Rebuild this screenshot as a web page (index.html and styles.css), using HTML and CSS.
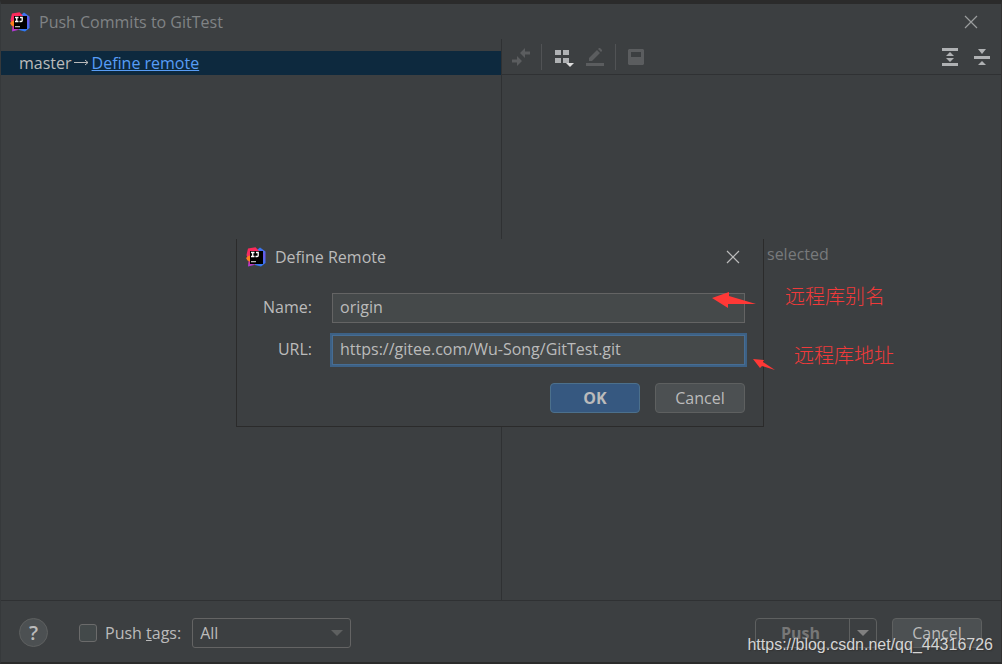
FILE: index.html
```html
<!DOCTYPE html>
<html lang="en">
<head>
<meta charset="utf-8">
<title>Push Commits to GitTest</title>
<link rel="stylesheet" href="styles.css">
</head>
<body>
<svg class="defs" aria-hidden="true">
  <defs>
    <linearGradient id="pink" x1="0" y1="0" x2="0" y2="1"><stop offset="0" stop-color="#fe2857"/><stop offset="0.6" stop-color="#f0326e"/><stop offset="1" stop-color="#a83ae0"/></linearGradient>
    <linearGradient id="blue" x1="0" y1="0" x2="0" y2="1"><stop offset="0" stop-color="#2f7df0"/><stop offset="0.4" stop-color="#6b57e8"/><stop offset="1" stop-color="#2a7bf4"/></linearGradient>
    <symbol id="logo" viewBox="0 0 20 20">
      <path fill="url(#blue)" d="M11 3 14 0.500 19.500 4.500V16L15 19.500 9 18Z"/>
      <path fill="url(#pink)" d="M2 1.500 9.500 0.300 13 4 6 12 6 17 10 17.500 2 19.500 2.500 14 0.500 8Z"/>
      <path fill="#fc801d" d="M0 11 3 8.500 5 9V15L1.500 13.500Z"/>
      <path fill="#000" d="M4 4H17V17H4Z"/>
      <path fill="none" stroke="#fff" stroke-width="1.300" d="M5 5.500H8.500M6.750 5.500V9.500M5 9.500H8.500M10 5.500H12.200V8.500Q12.200 9.500 11.200 9.500H9.500"/>
      <path fill="#b5b5b5" d="M5 14H10V15.300H5Z"/>
    </symbol>
  </defs>
</svg>
<div class="window">
  <header class="titlebar">
    <svg class="logo"><use href="#logo"/></svg>
    <h1 class="title">Push Commits to GitTest</h1>
    <button class="close" aria-label="Close"><svg width="14" height="14" viewBox="0 0 14 14"><path d="M1 1 13 13M13 1 1 13"/></svg></button>
  </header>
  <main class="panes">
    <section class="tree">
      <div class="branch"><span>master</span><svg width="17" height="10" viewBox="0 0 17 10"><path d="M1 4.500H15M12 2 15 4.500 12 7"/></svg><a href="#remote">Define remote</a></div>
    </section>
    <section class="details">
      <div class="toolbar">
        <button class="tool dim" aria-label="Show diff"><svg width="18" height="18" viewBox="0 0 18 18"><path d="M8 5 13 0V3.500H18V6.500H13V10ZM10 13 5 8V11.500H0V14.500H5V18Z"/></svg></button>
        <span class="divider"></span>
        <button class="tool group" aria-label="Group by"><svg width="20" height="18" viewBox="0 0 20 18"><path d="M1 2H7V7H1ZM9 2H15V7H9ZM1 10H7V15H1ZM9 10H15V15H9Z"/><path class="caret" d="M12 15H20L16 19Z"/></svg></button>
        <button class="tool dim" aria-label="Edit"><svg width="18" height="18" viewBox="0 0 18 18"><path d="M0 15H18V18H0ZM3 13V10L11 2 14 5 6 13ZM12 1 13 0H14L16 2V3L15 4Z"/></svg></button>
        <span class="divider"></span>
        <button class="tool dim" aria-label="Preview"><svg width="16" height="16" viewBox="0 0 16 16"><path fill-rule="evenodd" d="M1 0H15L16 1V15L15 16H1L0 15V1ZM3 3V8H13V3Z"/></svg></button>
        <span class="spacer"></span>
        <button class="tool expand" aria-label="Expand all"><svg width="16" height="18" viewBox="0 0 16 18"><path d="M0 0H16V3H0ZM0 15H16V18H0ZM4 8 8 4 12 8ZM4 10H12L8 14Z"/></svg></button>
        <button class="tool" aria-label="Collapse all"><svg width="16" height="16" viewBox="0 0 16 16"><path d="M0 7H16V10H0ZM4 0H12L8 5ZM4 16 8 12 12 16Z"/></svg></button>
      </div>
      <p class="empty">selected</p>
    </section>
  </main>
  <footer class="footer">
    <button class="help" aria-label="Help">?</button>
    <input class="check" type="checkbox" id="tags">
    <label for="tags">Push <u>t</u>ags:</label>
    <div class="combo">
      <select aria-label="Tags to push"><option>All</option></select>
      <svg width="12" height="6" viewBox="0 0 12 6"><path d="M0 0H12L6 6Z"/></svg>
    </div>
    <span class="spacer"></span>
    <div class="split"><button class="push" disabled>Push</button><button class="more" aria-label="Push options"><svg width="12" height="6" viewBox="0 0 12 6"><path d="M0 0H12L6 6Z"/></svg></button></div>
    <button class="button">Cancel</button>
  </footer>

  <form class="dialog" role="dialog" aria-labelledby="dialog-title">
    <div class="dialog-head">
      <svg class="logo"><use href="#logo"/></svg>
      <h2 class="title" id="dialog-title">Define Remote</h2>
      <button type="button" class="close" aria-label="Close dialog"><svg width="14" height="14" viewBox="0 0 14 14"><path d="M1 1 13 13M13 1 1 13"/></svg></button>
    </div>
    <div class="fields">
      <label for="name">Name:</label><input id="name" type="text" value="origin">
      <label for="url">URL:</label><input class="focused" id="url" type="text" value="https://gitee.com/Wu-Song/GitTest.git">
    </div>
    <div class="actions"><button type="button" class="button primary">OK</button><button type="button" class="button">Cancel</button></div>
    <svg class="arrow arrow-name" width="44" height="16" viewBox="0 0 44 16"><path d="M0 6 17 0V4L44 12 16 12V16Z"/></svg>
    <svg class="arrow arrow-url" width="22" height="12" viewBox="0 0 22 12"><path d="M0 0 11 1 10 3 22 11 9 7 7 9Z"/></svg>
    <span class="note note-name" lang="zh">远程库别名</span>
    <span class="note note-url" lang="zh">远程库地址</span>
  </form>
  <span class="watermark">https://blog.csdn.net/qq_44316726</span>
</div>
</body>
</html>
```
FILE: styles.css
```css
* { box-sizing: border-box; }
body { margin: 0; background: #3c3f41; color: #bbbbbb; font: 16px/20px "Open Sans", sans-serif; }
button, input, select { font: inherit; color: inherit; margin: 0; }
button { padding: 0; border: 0; background: none; }
svg { display: block; flex: none; }
.defs { position: absolute; width: 0; height: 0; }
.window { position: relative; display: flex; flex-direction: column; min-height: 100vh; border: 1px solid #323232; border-top: 4px solid #2b2b2b; border-bottom: 2px solid #2b2b2b; border-left-color: #36393b; }
.titlebar { display: flex; align-items: center; height: 35px; padding: 0 23px 0 9px; color: #808385; }
.logo { width: 20px; height: 20px; }
.title { flex: 1; margin: 0 0 0 9px; font-size: 16px; font-weight: 400; }
.close path { fill: none; stroke: #9b9d9e; stroke-width: 1.2; }
.panes { flex: 1; display: grid; grid-template-columns: 1fr 1fr; }
.tree { padding-top: 12px; }
.branch { display: flex; align-items: center; height: 24px; padding-left: 18px; background: #0d293e; }
.branch svg { margin: 0 2px 0 1px; }
.branch path { fill: none; stroke: #bbbbbb; }
.branch a { color: #589df6; }
.details { border-left: 1px solid #2f3133; }
.toolbar { display: flex; align-items: center; height: 36px; padding: 0 11px 0 10px; border-bottom: 1px solid #2f3133; }
.tool path { fill: #afb1b3; }
.tool.dim path { fill: #5b5d5f; }
.tool svg { overflow: visible; }
.tool .caret { fill: #dddddd; }
.divider { width: 1px; height: 26px; margin: 0 12px 0 11px; background: #515355; }
.group { margin-right: 12px; }
.spacer { flex: 1; }
.expand { margin-right: 16px; }
.empty { margin: 0; padding: 169px 0 0 265px; color: #787a7c; }
.footer { display: flex; align-items: center; height: 62px; padding: 2px 19px 0 18px; border-top: 1px solid #2f3133; }
.help { width: 29px; height: 29px; border: 1px solid #5e6060; border-radius: 50%; background: #4c5052; font-size: 20px; font-weight: 600; }
.check { appearance: none; width: 18px; height: 18px; margin: 0 8px 0 31px; border: 1px solid #6b6b6b; border-radius: 3px; background: #43494a; }
.combo { position: relative; width: 159px; margin-left: 11px; }
.combo select { appearance: none; width: 100%; height: 30px; padding: 0 7px; border: 1px solid #646464; border-radius: 3px; background: #3c3f41; }
.combo svg { position: absolute; right: 8px; top: 12px; }
.combo path { fill: #5e6060; }
.split { display: flex; margin-right: 15px; height: 30px; border: 1px solid #5e6060; border-radius: 4px; }
.push { width: 93px; padding-right: 4px; color: #777777; font-weight: 700; }
.more { display: grid; place-items: center; width: 27px; border-left: 1px solid #5e6060; }
.more path { fill: #808080; }
.button { width: 90px; height: 30px; border: 1px solid #5e6060; border-radius: 4px; background: #4c5052; }
.primary { border-color: #4c708c; background: #365880; font-weight: 700; }
.dialog { position: absolute; left: calc(50% - 265px); top: calc(50% - 94px); width: 528px; padding: 0 18px 13px 9px; border: 1px solid #2b2b2b; border-top: 0; background: #3c3f41; }
.dialog-head { display: flex; align-items: center; height: 36px; padding-right: 5px; }
.dialog-head .close path { stroke: #bbbbbb; }
.fields { display: grid; grid-template-columns: 66px 1fr; gap: 12px 20px; align-items: center; margin-top: 18px; }
.fields label { padding-bottom: 2px; text-align: right; }
.fields input { width: 100%; height: 30px; padding: 0 7px 2px; border: 1px solid #646464; border-radius: 0; background: #45494a; outline: 0; }
.fields .focused { border-color: #466d94; box-shadow: 0 0 0 2px #3d6185; }
.actions { display: flex; justify-content: flex-end; gap: 15px; margin-top: 18px; }
.arrow { position: absolute; fill: #ff3836; }
.arrow-name { left: 475px; top: 53px; }
.arrow-url { left: 516px; top: 120px; }
.note { position: absolute; color: #f03a3a; font: 20px/24px "Noto Sans CJK SC", sans-serif; font-weight: 300; white-space: nowrap; }
.note-name { left: 548px; top: 45px; }
.note-url { left: 557px; top: 104px; }
.watermark { position: absolute; right: 8px; bottom: 7px; color: #d5d5d5; font: 16px/20px "Liberation Sans", Arial, sans-serif; text-shadow: 1px 1px 1px #333333; }
```
